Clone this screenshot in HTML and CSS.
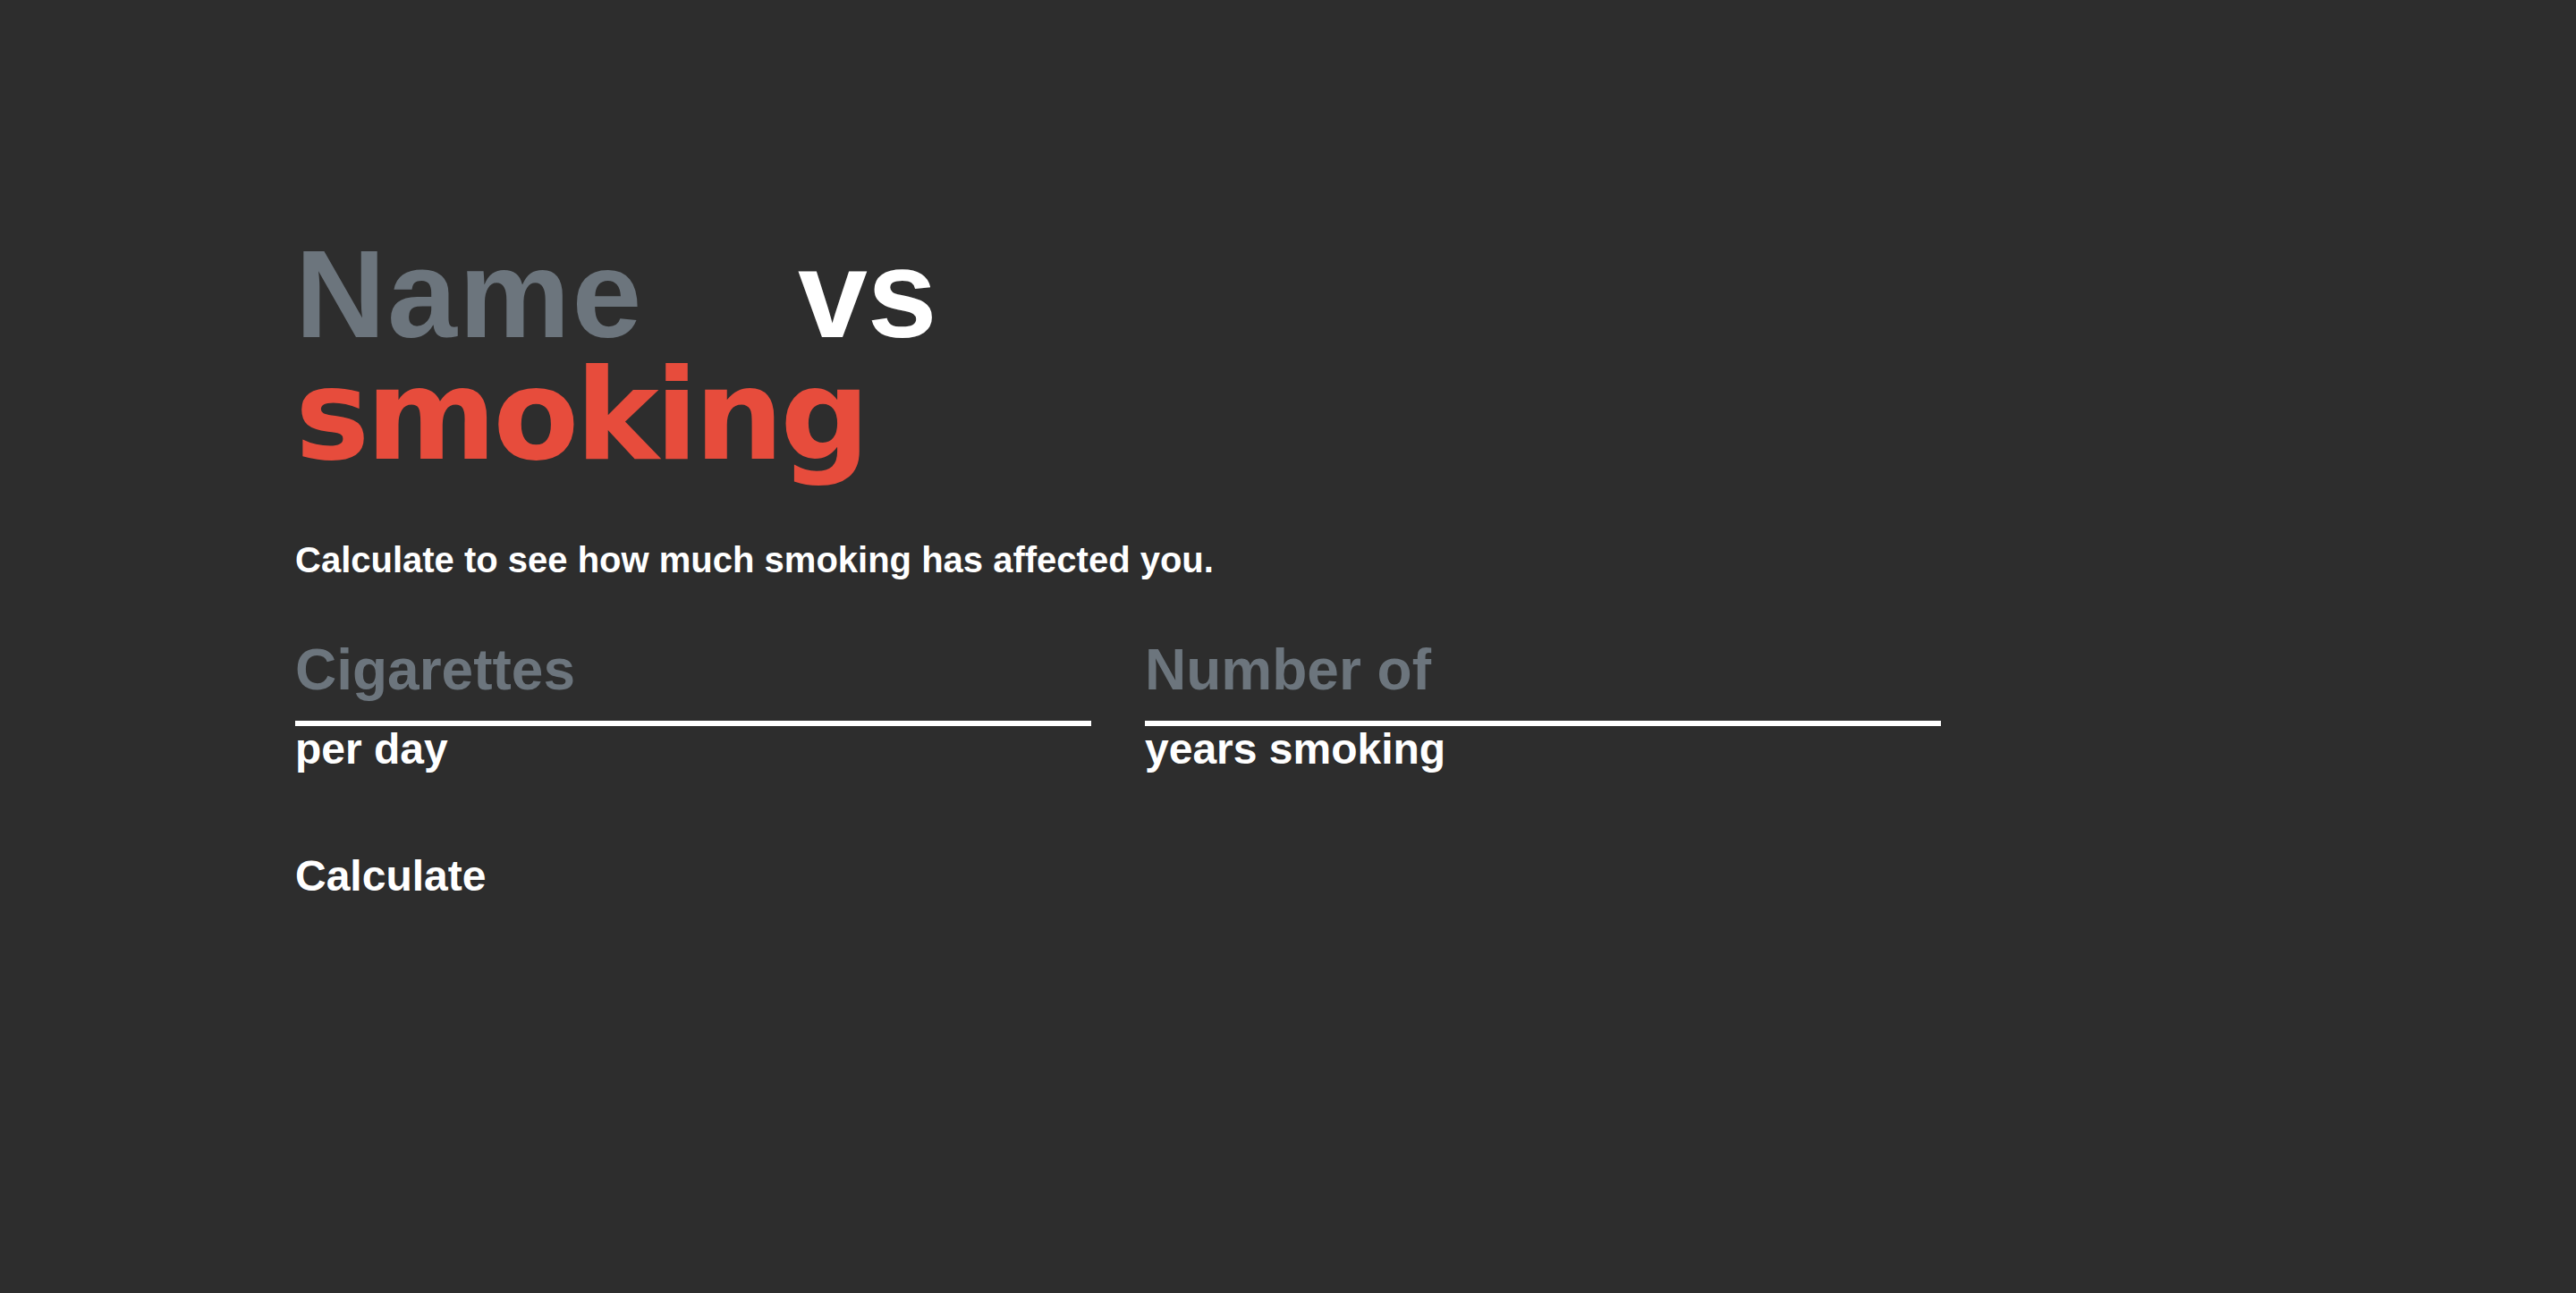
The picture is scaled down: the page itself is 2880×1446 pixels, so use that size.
FILE: index.html
```html
<!DOCTYPE html>
<html lang="en">
<head>
    <meta charset="UTF-8">
    <meta name="viewport" content="width=device-width, initial-scale=1.0">
    <title>Name vs smoking</title>
    <link rel="stylesheet" href="styles.css">
</head>
<body>
    <div class="main">
        <h1 class="title">
            <span class="title-row">
                <input type="text" id="name-input" class="name-input" placeholder="Name">
                <span class="title-vs">vs</span>
            </span>
            <span class="title-smoking">smoking</span>
        </h1>

        <p class="intro">Calculate to see how much smoking has affected you.</p>

        <div class="fields">
            <div class="field">
                <input type="number" id="cigs-input" class="field-input" placeholder="Cigarettes">
                <label for="cigs-input" class="field-label">per day</label>
            </div>
            <div class="field">
                <input type="number" id="years-input" class="field-input" placeholder="Number of">
                <label for="years-input" class="field-label">years smoking</label>
            </div>
        </div>

        <button id="calc-button" class="calc-button">Calculate</button>
    </div>
</body>
</html>
```

FILE: styles.css
```css
body {
    font-family: "Liberation Sans", Arial, sans-serif;
    background-color: #2d2d2d;
    color: #ffffff;
    margin: 0;
    padding: 0;
    height: 100vh;
}

.main {
    padding: 262px 0 0 330px;
}

/* Heading */
.title {
    margin: 0;
    font-size: 140px;
    font-weight: bold;
}

.title-row {
    display: flex;
    align-items: baseline;
    height: 134px;
    line-height: 134px;
}

.name-input {
    width: 562px;
    height: 134px;
    padding: 0;
    border: none;
    outline: none;
    background: transparent;
    color: #ffffff;
    font-family: inherit;
    font-size: 140px;
    font-weight: bold;
    letter-spacing: 2px;
}

.name-input::placeholder,
.field-input::placeholder {
    color: #6c757d;
    opacity: 1;
}

.title-vs {
    color: #ffffff;
}

.title-smoking {
    display: block;
    height: 134px;
    line-height: 134px;
    margin-top: 2px;
    font-family: "DejaVu Sans", sans-serif;
    letter-spacing: -4px;
    color: #e74c3c;
}

.intro {
    margin: 70px 0 0;
    font-size: 40px;
    line-height: 48px;
    font-weight: bold;
}

/* Inputs */
.fields {
    display: flex;
    gap: 60px;
    margin-top: 63px;
}

.field {
    width: 890px;
}

.field-input {
    display: block;
    width: 100%;
    height: 72px;
    padding: 0 0 21px;
    border: none;
    border-bottom: 6px solid #ffffff;
    outline: none;
    background: transparent;
    color: #ffffff;
    font-family: inherit;
    font-size: 64px;
    font-weight: bold;
    box-sizing: content-box;
    -moz-appearance: textfield;
}

.field-input::-webkit-outer-spin-button,
.field-input::-webkit-inner-spin-button {
    -webkit-appearance: none;
    margin: 0;
}

.field-label {
    display: block;
    margin-top: 2px;
    font-size: 48px;
    line-height: 48px;
    font-weight: bold;
}

.calc-button {
    display: block;
    margin-top: 94px;
    padding: 0;
    border: none;
    background: transparent;
    color: #ffffff;
    font-family: inherit;
    font-size: 48px;
    line-height: 48px;
    font-weight: bold;
    cursor: pointer;
}
```
